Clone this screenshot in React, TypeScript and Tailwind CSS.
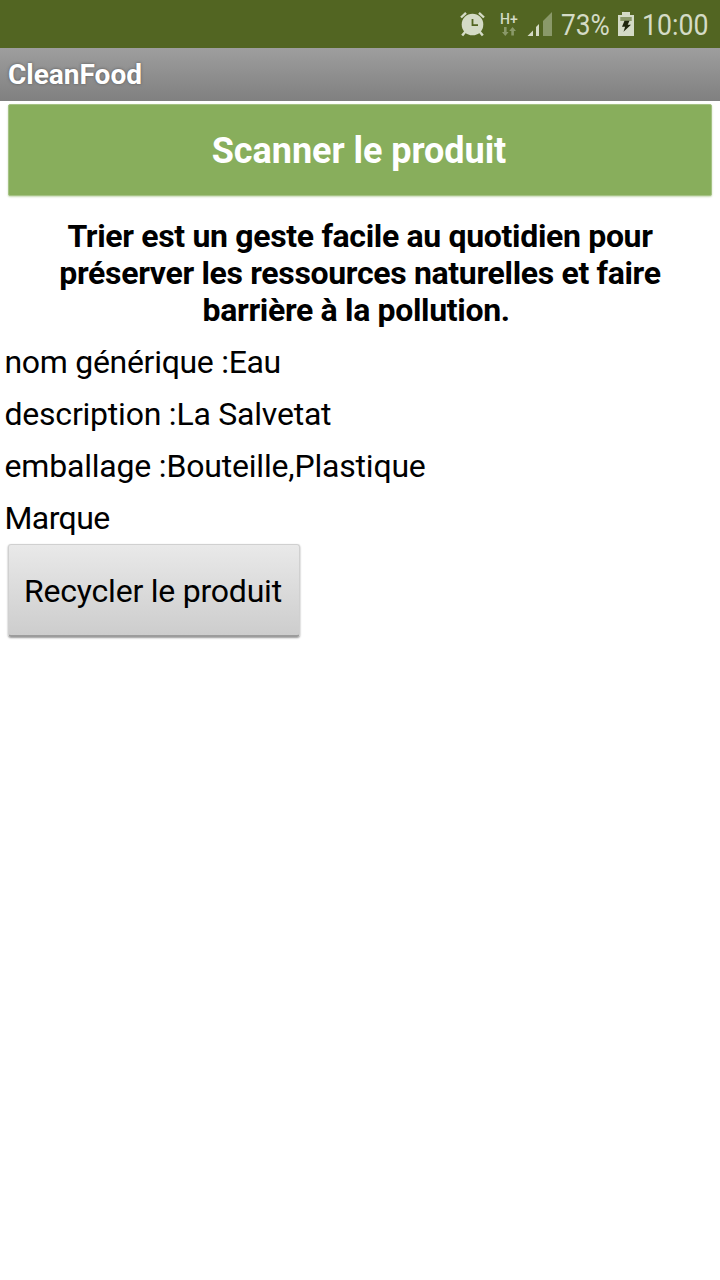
const details = [
  { label: "nom générique :", value: "Eau", tracking: "tracking-[-0.3px]" },
  { label: "description :", value: "La Salvetat", tracking: "tracking-[-0.22px]" },
  { label: "emballage :", value: "Bouteille,Plastique", tracking: "tracking-[-0.19px]" },
  { label: "Marque", value: "", tracking: "tracking-[-0.6px]" },
];

function AlarmIcon() {
  return (
    <svg width="26" height="26" viewBox="0 0 26 26" className="mt-[11px] shrink-0" fill="#d4dbc6">
      <circle cx="12.5" cy="13.5" r="10.8" />
      <path d="M5.5 20.5l-3.3 4M19.5 20.5l3.3 4" stroke="#d4dbc6" strokeWidth="2.5" />
      <path d="M1 6.5l5-4.7M24 6.5l-5-4.7" stroke="#d4dbc6" strokeWidth="2.4" />
      <path d="M12.5 8v6.2h5.5" fill="none" stroke="#526522" strokeWidth="1.8" />
    </svg>
  );
}

function DataArrows() {
  return (
    <svg width="14" height="9" viewBox="0 0 14 9" fill="#8a9969">
      <path d="M2 0h2.6v5H6.6L3.3 9 0 5h2zM9.3 8.5h2.6V4H14l-3.4-4L7.2 4h2.1z" />
    </svg>
  );
}

function SignalIcon() {
  return (
    <svg width="25" height="24" viewBox="0 0 25 24" className="ml-[8px] mt-3 shrink-0" fill="#d4dbc6">
      <path d="M0.5 24l5.5-5.5V24z" />
      <path d="M9 24v-9l3-3v12z" />
      <path d="M16 24V9l9-9v24z" fill="#8a9969" />
    </svg>
  );
}

function BatteryIcon() {
  return (
    <svg width="16" height="24" viewBox="0 0 16 24" className="ml-[8px] mt-3 shrink-0" fill="#d4dbc6">
      <path d="M4 0h8v3h4v21H0V3h4z" />
      <path d="M2.3 5h11.4v4H2.3z" fill="#8a9969" />
      <path d="M6.5 8.8h5l-1.8 4H13l-7.5 7 1.6-5H4z" fill="#1f260d" />
    </svg>
  );
}

function StatusBar() {
  return (
    <div className="flex h-12 bg-[#526522] pl-[460px] text-[30px] leading-[50px] text-[#d4dbc6]">
      <AlarmIcon />
      <div className="ml-[14px] flex w-[19px] shrink-0 flex-col items-start pt-3">
        <span className="text-[14px] leading-[15px] font-medium">H+</span>
        <div className="ml-[2px] flex">
          <DataArrows />
        </div>
      </div>
      <SignalIcon />
      <span className="ml-[9px] w-[49px] shrink-0 origin-left scale-x-[0.875]">73%</span>
      <BatteryIcon />
      <span className="ml-[8px] origin-left scale-x-[0.89]">10:00</span>
    </div>
  );
}

export default function App() {
  return (
    <div className="h-[1280px] w-[720px] overflow-hidden bg-white font-[Roboto,sans-serif] text-black">
      <StatusBar />
      <header className="h-[53px] bg-linear-to-b from-[#9e9e9e] to-[#808080] pl-2 text-[28px] leading-[53px] font-bold text-white [text-shadow:0_0_3px_#555]">
        CleanFood
      </header>

      <main>
        <button className="mx-2 mt-[3px] block h-[92px] w-[704px] rounded-[2px] border border-[#a5c284] bg-[#88ae5c] pt-[2px] pr-[2px] text-[36px] tracking-[-0.05px] font-bold text-white shadow-[0_1px_2px_#c8dab5]">
          Scanner le produit
        </button>

        <p className="mx-auto mt-[22px] w-[640px] text-center text-[32px] leading-[37px] tracking-[-0.33px] font-bold">
          Trier est un geste facile au quotidien pour préserver les ressources naturelles et faire barrière à la
          pollution.&nbsp;
        </p>

        <div className="mt-[7px] pl-[4.5px] text-[32px] leading-[52px]">
          {details.map(({ label, value, tracking }) => (
            <p key={label} className={tracking}>
              {label}
              {value}
            </p>
          ))}
        </div>

        <button className="ml-2 block h-[93px] w-[292px] rounded-[3px] border border-[#d0d0d0] border-b-2 border-b-[#9c9c9c] bg-linear-to-b from-[#e9e9e9] to-[#cdcdcd] pt-[2px] pr-[2px] text-[32px] tracking-[-0.22px] shadow-[0_1px_2px_#999]">
          Recycler le produit
        </button>
      </main>
    </div>
  );
}
